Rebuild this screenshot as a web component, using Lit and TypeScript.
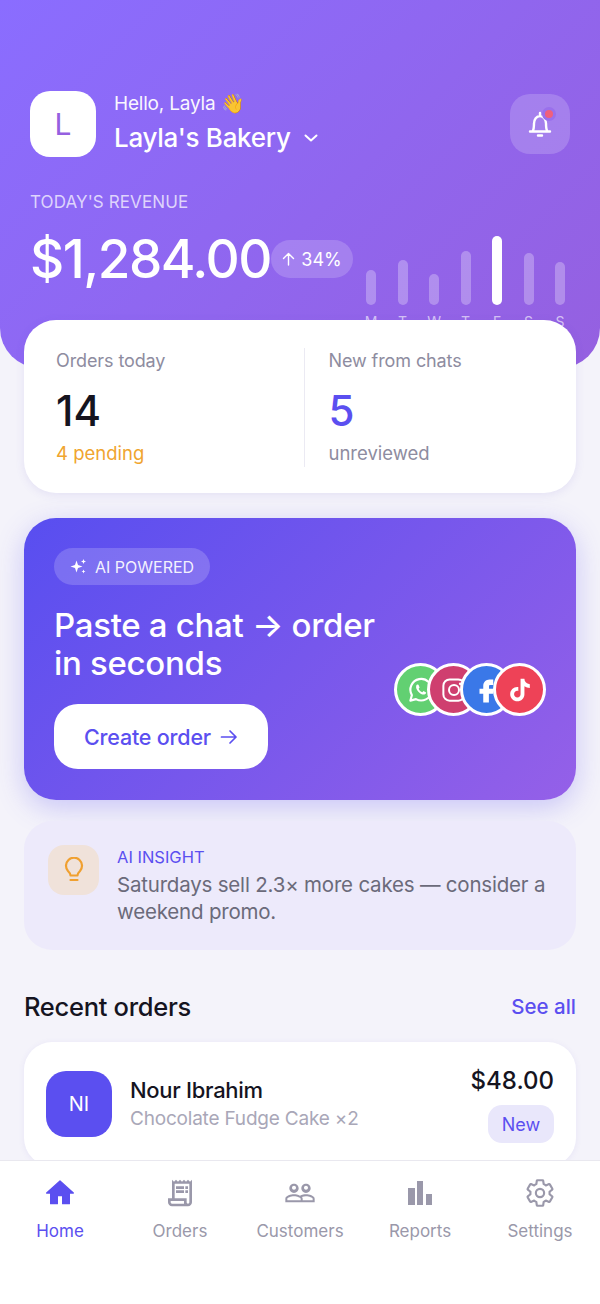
import { LitElement, css, html, svg } from "lit";
import { customElement } from "lit/decorators.js";

const bars = [
  { day: "M", h: 35 },
  { day: "T", h: 45 },
  { day: "W", h: 31 },
  { day: "T", h: 54 },
  { day: "F", h: 69, on: true },
  { day: "S", h: 52 },
  { day: "S", h: 43 },
];

const navIcons = {
  home: svg`<path d="M10 20v-6h4v6h5v-8h3L12 3 2 12h3v8z" fill="currentColor" stroke="currentColor" stroke-width="1" stroke-linejoin="round"/>`,
  orders: svg`<path fill="currentColor" d="M19.5 3.5 18 2l-1.5 1.5L15 2l-1.5 1.5L12 2l-1.5 1.5L9 2 7.5 3.5 6 2v14H3v3c0 1.66 1.34 3 3 3h12c1.66 0 3-1.34 3-3V2l-1.5 1.5zM15 20H6c-.55 0-1-.45-1-1v-1h10v2zm4-1c0 .55-.45 1-1 1s-1-.45-1-1v-3H8V5h11v14z"/><path fill="currentColor" d="M9 7h6v2H9zm7 0h2v2h-2zM9 10h6v2H9zm7 0h2v2h-2z"/>`,
  customers: svg`<path fill="currentColor" d="M16.5 13c-1.2 0-3.07.34-4.5 1-1.43-.67-3.3-1-4.5-1C5.33 13 1 14.08 1 16.25V19h22v-2.75c0-2.17-4.33-3.25-6.5-3.25zm-4 4.5h-10v-1.25c0-.54 2.56-1.75 5-1.75s5 1.21 5 1.75v1.25zm9 0H14v-1.25c0-.46-.2-.86-.52-1.22.88-.3 1.96-.53 3.02-.53 2.44 0 5 1.21 5 1.75v1.25zM7.5 12c1.93 0 3.5-1.57 3.5-3.5S9.43 5 7.5 5 4 6.57 4 8.5 5.57 12 7.5 12zm0-5.5c.83 0 1.5.67 1.5 1.5s-.67 1.5-1.5 1.5S6 8.83 6 8s.67-1.5 1.5-1.5zm9 5.5c1.93 0 3.5-1.57 3.5-3.5S18.43 5 16.5 5 13 6.57 13 8.5s1.57 3.5 3.5 3.5zm0-5.5c.83 0 1.5.67 1.5 1.5s-.67 1.5-1.5 1.5S15 8.83 15 8s.67-1.5 1.5-1.5z"/>`,
  reports: svg`<path fill="currentColor" d="M3 8.25h5.25V21H3zM9.75 3h4.5v18h-4.5zM16.5 12.75H21V21h-4.5z"/>`,
  settings: svg`<path fill="none" stroke="currentColor" stroke-width="1.6" stroke-linejoin="round" d="M19.14 12.94c.04-.3.06-.61.06-.94 0-.32-.02-.64-.07-.94l2.03-1.58c.18-.14.23-.41.12-.61l-1.92-3.32c-.12-.22-.37-.29-.59-.22l-2.39.96c-.5-.38-1.03-.7-1.62-.94l-.36-2.54c-.04-.24-.24-.41-.48-.41h-3.84c-.24 0-.43.17-.47.41l-.36 2.54c-.59.24-1.13.57-1.62.94l-2.39-.96c-.22-.08-.47 0-.59.22L2.74 8.87c-.12.21-.08.47.12.61l2.03 1.58c-.05.3-.09.63-.09.94s.02.64.07.94l-2.03 1.58c-.18.14-.23.41-.12.61l1.92 3.32c.12.22.37.29.59.22l2.39-.96c.5.38 1.03.7 1.62.94l.36 2.54c.05.24.24.41.48.41h3.84c.24 0 .44-.17.47-.41l.36-2.54c.59-.24 1.13-.56 1.62-.94l2.39.96c.22.08.47 0 .59-.22l1.92-3.32c.12-.22.07-.47-.12-.61l-2.01-1.58z"/><circle cx="12" cy="12" r="3.1" fill="none" stroke="currentColor" stroke-width="1.6"/>`,
};

const navItems: { label: string; icon: keyof typeof navIcons; on?: boolean }[] = [
  { label: "Home", icon: "home", on: true },
  { label: "Orders", icon: "orders" },
  { label: "Customers", icon: "customers" },
  { label: "Reports", icon: "reports" },
  { label: "Settings", icon: "settings" },
];

const socials = [
  {
    cls: "wa",
    icon: svg`<path fill="none" stroke="#fff" stroke-width="1.7" stroke-linejoin="round" d="M3.5 20.5l1.2-4.4A8.6 8.6 0 1 1 8 19.3z"/><path fill="#fff" d="M9.2 7.6c-.3 0-.8.2-1 .9-.5 1.500.3 3.200 1.700 4.800 1.500 1.600 3.300 2.500 4.700 2.300.9-.2 1.500-.9 1.500-1.700l-2.100-1.100-.9 1c-1.300-.5-2.400-1.600-3-2.900l.8-.9-.9-2.300z"/>`,
  },
  {
    cls: "ig",
    icon: svg`<rect x="3.500" y="3.500" width="17" height="17" rx="5" fill="none" stroke="#fff" stroke-width="1.600"/><circle cx="12" cy="12" r="4" fill="none" stroke="#fff" stroke-width="1.600"/><circle cx="17" cy="7" r="1.100" fill="#fff"/>`,
  },
  {
    cls: "fb",
    icon: svg`<path fill="#fff" d="M14 8h3V3.500h-3c-2.800 0-5 2.200-5 5V11H6v4h3v7h4.500v-7H17l.6-4h-4V9c0-.6.4-1 1-1z"/>`,
  },
  {
    cls: "tt",
    icon: svg`<path fill="#fff" d="M16.600 5.820A4.280 4.280 0 0 1 15.540 3h-3.090v12.400a2.590 2.590 0 0 1-2.590 2.500c-1.420 0-2.600-1.160-2.600-2.600 0-1.720 1.660-3.010 3.370-2.480V9.660c-3.450-.46-6.470 2.220-6.470 5.640 0 3.330 2.760 5.700 5.690 5.700 3.140 0 5.690-2.550 5.690-5.700V9.010a7.350 7.350 0 0 0 4.300 1.380V7.300s-1.880.09-3.240-1.480z"/>`,
  },
];

@customElement("app-root")
export class AppRoot extends LitElement {
  static styles = css`
    :host {
      display: flex;
      flex-direction: column;
      height: 1304px;
      overflow: hidden;
      background: #f4f3fa;
      font-family: Inter, "Liberation Sans", sans-serif;
      color: #15141f;
    }

    main {
      flex: 1;
      min-height: 0;
      overflow: hidden;
    }

    /* header */
    .top {
      height: 368px;
      box-sizing: border-box;
      padding: 90px 30px 0;
      border-radius: 0 0 40px 40px;
      background: linear-gradient(135deg, #8a6dff 0%, #9560e0 100%);
      color: #fff;
    }

    .top-row {
      display: flex;
      align-items: center;
      gap: 18px;
    }

    .logo {
      width: 66px;
      height: 66px;
      border-radius: 20px;
      background: #fff;
      color: #9560e0;
      font-size: 30px;
      display: flex;
      align-items: center;
      justify-content: center;
    }

    .who {
      flex: 1;
    }

    .hello {
      font-size: 19px;
      line-height: 28px;
      letter-spacing: -0.2px;
      opacity: 0.95;
    }

    .shop {
      display: flex;
      align-items: center;
      gap: 12px;
      font-size: 26px;
      line-height: 40px;
      font-weight: 500;
      letter-spacing: -0.3px;
    }

    .bell {
      position: relative;
      width: 60px;
      height: 60px;
      border-radius: 20px;
      background: rgba(255, 255, 255, 0.18);
      display: flex;
      align-items: center;
      justify-content: center;
    }

    .dot {
      position: absolute;
      top: 13px;
      right: 14px;
      width: 8px;
      height: 8px;
      border-radius: 50%;
      background: #f0607c;
      border: 3px solid #9a70ec;
    }

    .rev-label {
      margin-top: 33px;
      font-size: 17px;
      line-height: 22px;
      letter-spacing: 0.1px;
      color: rgba(255, 255, 255, 0.72);
    }

    .rev-row {
      display: flex;
      align-items: flex-start;
      margin-top: -8px;
    }

    .amount {
      width: 246px;
      margin-top: 22px;
      font-size: 53px;
      line-height: 64px;
      font-weight: 500;
      letter-spacing: -1.5px;
      white-space: nowrap;
    }

    .trend {
      display: flex;
      align-items: center;
      gap: 6px;
      box-sizing: border-box;
      width: 85px;
      height: 38px;
      margin-top: 35px;
      justify-content: center;
      border-radius: 19px;
      background: rgba(255, 255, 255, 0.18);
      font-size: 18px;
    }

    .chart {
      display: flex;
      margin-left: 8px;
      width: 216px;
      justify-content: space-between;
    }

    .col {
      width: 20px;
      height: 100px;
      display: flex;
      flex-direction: column;
      align-items: center;
      justify-content: flex-end;
    }

    .bar {
      width: 10px;
      border-radius: 5px;
      background: rgba(255, 255, 255, 0.28);
    }

    .bar.on {
      background: #fff;
    }

    .day {
      height: 0;
      line-height: 0;
      transform: translateY(17px);
      font-size: 14px;
      color: rgba(255, 255, 255, 0.62);
    }

    /* stats */
    .stats {
      display: flex;
      margin: -48px 24px 0;
      height: 173px;
      box-sizing: border-box;
      padding: 28px 0 26px;
      border-radius: 32px;
      background: #fff;
      box-shadow: 0 2px 10px rgba(90, 70, 200, 0.1);
    }

    .stat {
      flex: 1;
      padding-left: 32px;
    }

    .stat + .stat {
      padding-left: 24px;
      border-left: 1px solid #ebeaf3;
    }

    .stat-label {
      font-size: 18px;
      line-height: 26px;
      color: #8e8ca0;
      letter-spacing: -0.1px;
    }

    .stat-num {
      font-size: 42px;
      line-height: 52px;
      margin-top: 11px;
      font-weight: 500;
    }

    .stat-num.blue {
      color: #5b4ff0;
    }

    .stat-sub {
      font-size: 18.5px;
      line-height: 28px;
      margin-top: 2px;
      color: #8e8ca0;
    }

    .stat-sub.warn {
      color: #f0a52f;
    }

    /* hero */
    .hero {
      display: flex;
      justify-content: space-between;
      height: 282px;
      box-sizing: border-box;
      margin: 25px 24px 0;
      padding: 30px;
      border-radius: 32px;
      background: linear-gradient(135deg, #584ef0 0%, #9560e8 100%);
      box-shadow: 0 8px 28px rgba(90, 78, 240, 0.28);
      color: #fff;
    }

    .ai-pill {
      display: inline-flex;
      align-items: center;
      gap: 8px;
      height: 37px;
      padding: 0 16px;
      border-radius: 19px;
      background: rgba(255, 255, 255, 0.18);
      font-size: 16px;
      color: rgba(255, 255, 255, 0.92);
    }

    .hero h2 {
      margin: 21px 0 0;
      font-size: 33px;
      line-height: 38px;
      font-weight: 500;
      letter-spacing: -0.3px;
    }

    .cta {
      display: inline-flex;
      align-items: center;
      justify-content: center;
      gap: 9px;
      box-sizing: border-box;
      width: 214px;
      height: 65px;
      margin-top: 22px;
      border-radius: 24px;
      background: #fff;
      color: #5b4ff0;
      font-size: 21.5px;
      font-weight: 500;
      letter-spacing: -0.2px;
    }

    .socials {
      display: flex;
      align-self: flex-end;
      margin-bottom: 54px;
    }

    .soc {
      box-sizing: border-box;
      width: 53px;
      height: 53px;
      border-radius: 50%;
      border: 3px solid #fff;
      display: flex;
      align-items: center;
      justify-content: center;
    }

    .soc + .soc {
      margin-left: -20px;
    }

    .wa { background: #62d072; }
    .ig { background: #cf3f6f; }
    .fb { background: #3a78e8; }
    .tt { background: #ee4257; }

    /* insight */
    .insight {
      display: flex;
      gap: 18px;
      height: 129px;
      box-sizing: border-box;
      margin: 21px 24px 0;
      padding: 24px;
      border-radius: 28px;
      background: #edeafb;
    }

    .bulb {
      flex: none;
      width: 51px;
      height: 50px;
      border-radius: 16px;
      background: #f0e2da;
      display: flex;
      align-items: center;
      justify-content: center;
    }

    .ins-title {
      font-size: 16.5px;
      line-height: 24px;
      color: #5b4ff0;
    }

    .ins-text {
      margin-top: 2px;
      font-size: 20.5px;
      line-height: 27px;
      color: #6b6a7a;
      letter-spacing: -0.2px;
    }

    /* orders */
    .sec {
      display: flex;
      align-items: center;
      justify-content: space-between;
      margin: 38px 24px 0;
      height: 36px;
    }

    .sec h3 {
      margin: 0;
      font-size: 25.5px;
      font-weight: 500;
      letter-spacing: -0.3px;
    }

    .see {
      font-size: 20.5px;
      font-weight: 500;
      color: #5b4ff0;
    }

    .order {
      display: flex;
      align-items: center;
      gap: 18px;
      height: 124px;
      box-sizing: border-box;
      margin: 18px 24px 0;
      padding: 0 22px;
      border-radius: 28px;
      background: #fff;
      box-shadow: 0 1px 6px rgba(90, 70, 200, 0.08);
    }

    .ini {
      flex: none;
      width: 66px;
      height: 66px;
      border-radius: 20px;
      background: #5b4ff0;
      color: #fff;
      font-size: 20px;
      display: flex;
      align-items: center;
      justify-content: center;
    }

    .o-main {
      flex: 1;
    }

    .o-name {
      font-size: 22px;
      line-height: 30px;
      font-weight: 500;
      letter-spacing: -0.3px;
    }

    .o-sub {
      font-size: 19px;
      line-height: 28px;
      color: #a9a7b8;
      letter-spacing: -0.2px;
    }

    .o-side {
      display: flex;
      flex-direction: column;
      align-items: flex-end;
      gap: 8px;
    }

    .price {
      font-size: 24px;
      line-height: 32px;
      font-weight: 500;
    }

    .badge {
      width: 66px;
      height: 38px;
      border-radius: 14px;
      background: #e9e7fb;
      color: #5b4ff0;
      font-size: 18px;
      display: flex;
      align-items: center;
      justify-content: center;
    }

    /* nav */
    nav {
      flex: none;
      height: 144px;
      box-sizing: border-box;
      display: flex;
      border-top: 1px solid #e9e8ef;
      background: #fff;
      position: relative;
    }

    .tab {
      width: 120px;
      padding-top: 16px;
      display: flex;
      flex-direction: column;
      align-items: center;
      gap: 10px;
      color: #9a98aa;
      font-size: 17px;
      line-height: 24px;
    }

    .tab.on {
      color: #5b4ff0;
    }

    .tab svg {
      display: block;
    }
  `;

  render() {
    return html`
      <main>
        <section class="top">
          <div class="top-row">
            <div class="logo">L</div>
            <div class="who">
              <div class="hello">Hello, Layla 👋</div>
              <div class="shop">
                Layla's Bakery
                <svg width="16" height="16" viewBox="0 0 16 16" fill="none" stroke="#fff" stroke-width="2" stroke-linecap="round" stroke-linejoin="round"><path d="M2.500 5.500 8 10.500l5.500-5"/></svg>
              </div>
            </div>
            <div class="bell">
              <svg width="26" height="28" viewBox="0 0 26 28" fill="none" stroke="#fff" stroke-width="2.400" stroke-linecap="round" stroke-linejoin="round">
                <path d="M3 21.500h20M5.500 21.500c1.500-2 1.500-5 1.500-8 0-4 2.500-7.500 6-7.500s6 3.500 6 7.500c0 3 0 6 1.500 8M13 3v3M11 25.500h4"/>
              </svg>
              <span class="dot"></span>
            </div>
          </div>
          <div class="rev-label">TODAY'S REVENUE</div>
          <div class="rev-row">
            <div class="amount">$1,284.00</div>
            <div class="trend">
              <svg width="13" height="14" viewBox="0 0 13 14" fill="none" stroke="#fff" stroke-width="1.400" stroke-linecap="round" stroke-linejoin="round"><path d="M6.500 13V1.500M1.500 6.500l5-5 5 5"/></svg>
              34%
            </div>
            <div class="chart">
              ${bars.map(
                (b) => html`<div class="col">
                  <div class="bar ${b.on ? "on" : ""}" style="height:${b.h}px"></div>
                  <div class="day">${b.day}</div>
                </div>`
              )}
            </div>
          </div>
        </section>

        <section class="stats">
          <div class="stat">
            <div class="stat-label">Orders today</div>
            <div class="stat-num">14</div>
            <div class="stat-sub warn">4 pending</div>
          </div>
          <div class="stat">
            <div class="stat-label">New from chats</div>
            <div class="stat-num blue">5</div>
            <div class="stat-sub">unreviewed</div>
          </div>
        </section>

        <section class="hero">
          <div>
            <div class="ai-pill">
              <svg width="17" height="17" viewBox="0 0 17 17" fill="#fff"><path d="M6.500 2.500 8 7l4.500 1.500L8 10l-1.500 4.500L5 10 .5 8.500 5 7zM13.500 1l.7 1.800L16 3.500l-1.800.7-.7 1.800-.7-1.800L11 3.500l1.800-.7zM13.500 11.500l.6 1.400 1.400.6-1.400.6-.6 1.400-.6-1.400-1.400-.6 1.400-.6z"/></svg>
              AI POWERED
            </div>
            <h2>Paste a chat → order<br />in seconds</h2>
            <div class="cta">
              Create order
              <svg width="18" height="16" viewBox="0 0 18 16" fill="none" stroke="#5b4ff0" stroke-width="1.700" stroke-linecap="round" stroke-linejoin="round"><path d="M1.500 8h14.500M10 2l6 6-6 6"/></svg>
            </div>
          </div>
          <div class="socials">
            ${socials.map(
              (s) => html`<div class="soc ${s.cls}">
                <svg width="30" height="30" viewBox="0 0 24 24">${s.icon}</svg>
              </div>`
            )}
          </div>
        </section>

        <section class="insight">
          <div class="bulb">
            <svg width="24" height="26" viewBox="0 0 24 26" fill="none" stroke="#f0a030" stroke-width="2.200" stroke-linecap="round" stroke-linejoin="round"><path d="M8.500 18.500c0-2-1-3-2.500-4.500a8 8 0 1 1 12 0c-1.500 1.500-2.500 2.500-2.500 4.500zM8.500 23h7"/></svg>
          </div>
          <div>
            <div class="ins-title">AI INSIGHT</div>
            <div class="ins-text">Saturdays sell 2.3× more cakes — consider a weekend promo.</div>
          </div>
        </section>

        <div class="sec">
          <h3>Recent orders</h3>
          <span class="see">See all</span>
        </div>

        <section class="order">
          <div class="ini">NI</div>
          <div class="o-main">
            <div class="o-name">Nour Ibrahim</div>
            <div class="o-sub">Chocolate Fudge Cake ×2</div>
          </div>
          <div class="o-side">
            <div class="price">$48.00</div>
            <div class="badge">New</div>
          </div>
        </section>
      </main>

      <nav>
        ${navItems.map(
          (t) => html`<div class="tab ${t.on ? "on" : ""}">
            <svg width="32" height="32" viewBox="0 0 24 24">${navIcons[t.icon]}</svg>
            ${t.label}
          </div>`
        )}
      </nav>
    `;
  }
}

declare global {
  interface HTMLElementTagNameMap {
    "app-root": AppRoot;
  }
}
